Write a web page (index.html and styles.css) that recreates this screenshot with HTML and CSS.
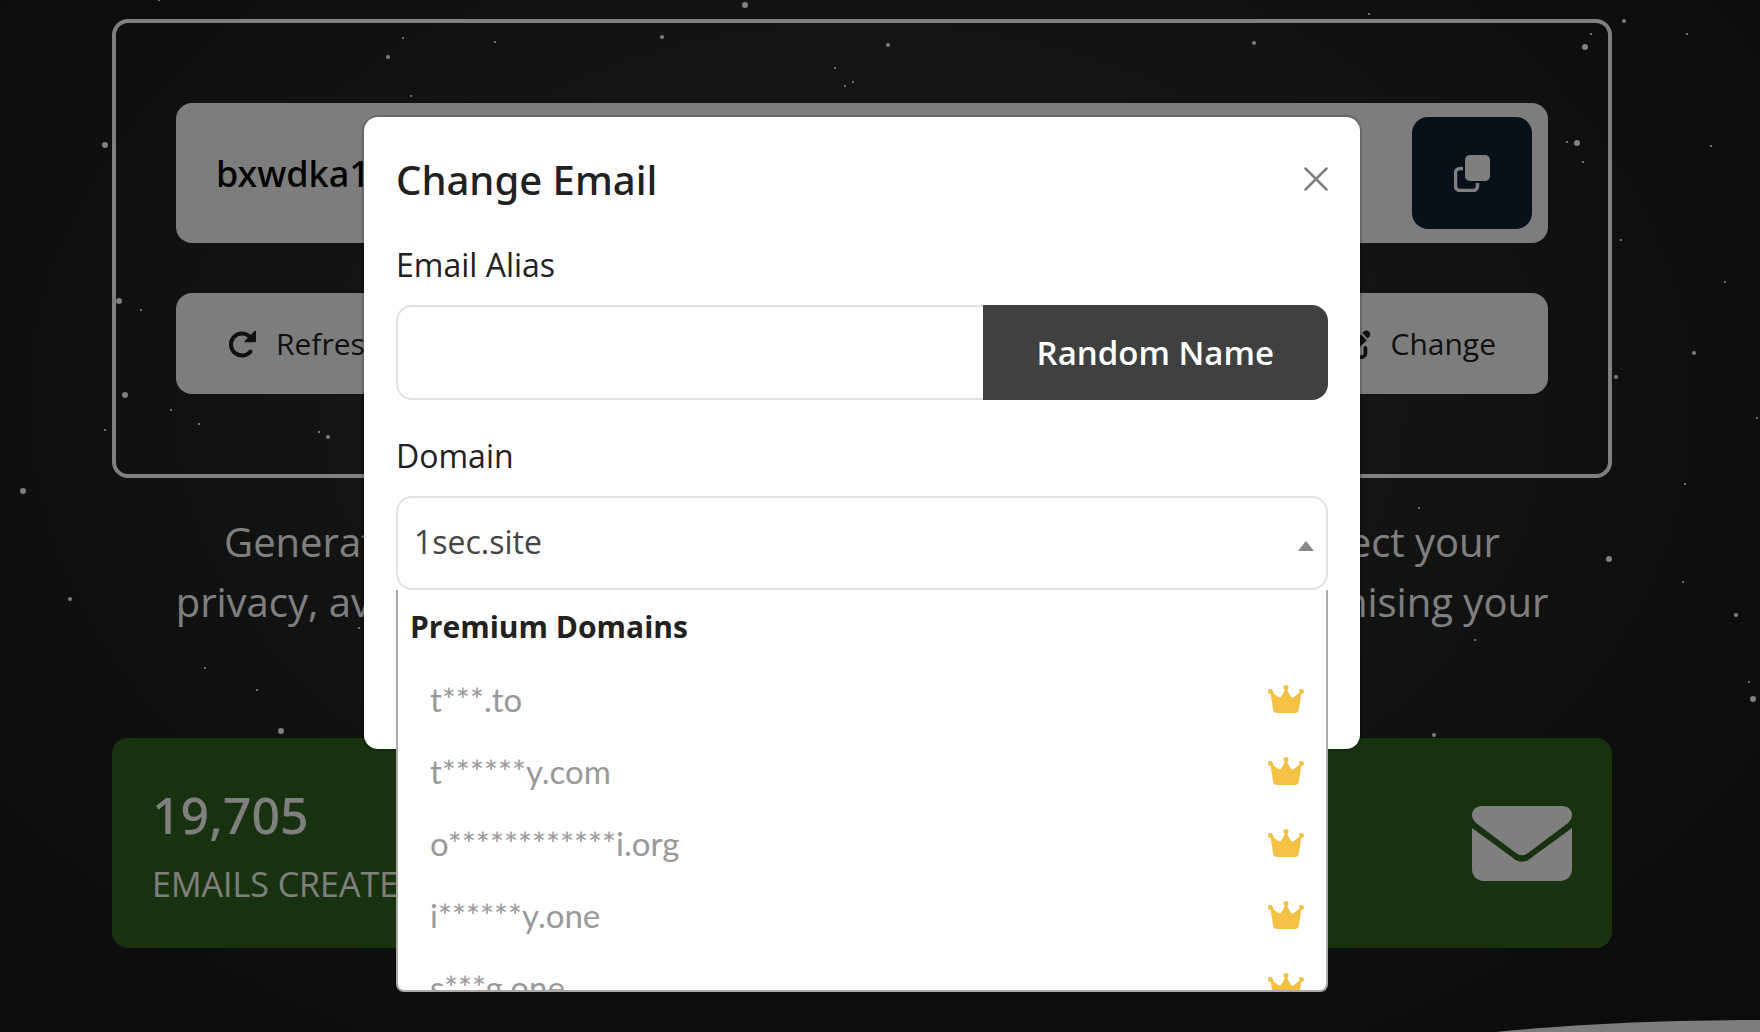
FILE: index.html
```
<!DOCTYPE html>
<html lang="en">
<head>
    <meta charset="UTF-8">
    <title>Temp Mail</title>
    <link rel="stylesheet" href="styles.css">
</head>
<body>
    <main class="page">
        <section class="mailbox">
            <div class="address-bar">
                <input class="address" type="text" value="bxwdka1ms@1sec.site" aria-label="Your email" readonly>
                <button class="copy-btn" aria-label="Copy">
                    <svg viewBox="0 0 36 37" width="36" height="37">
                        <rect x="11" y="0" width="25" height="26" rx="5" fill="currentColor"/>
                        <path d="M9 13.500H6a4.500 4.500 0 0 0-4.500 4.500v13a4.500 4.500 0 0 0 4.500 4.500h13a4.500 4.500 0 0 0 4.500-4.500v-3" fill="none" stroke="currentColor" stroke-width="3.500"/>
                    </svg>
                </button>
            </div>
            <div class="actions">
                <button class="action">
                    <svg viewBox="0 0 28 28" width="28" height="28">
                        <path d="M22.500 21.500A11 11 0 1 1 21.500 6.500" fill="none" stroke="currentColor" stroke-width="4" stroke-linecap="round"/>
                        <path d="M26 1.500a1 1 0 0 1 2 .7V11a1.300 1.300 0 0 1-1.300 1.300H18a1 1 0 0 1-.7-2z" fill="currentColor"/>
                    </svg>
                    Refresh
                </button>
                <button class="action">
                    <svg viewBox="0 0 26 28" width="26" height="28">
                        <path d="M9 0h8l2 3h7v4H0V3h7zM2 9h22l-1 17a2 2 0 0 1-2 2H5a2 2 0 0 1-2-2z" fill="currentColor"/>
                    </svg>
                    Delete
                </button>
                <button class="action">
                    <svg viewBox="0 0 512 512" width="30" height="30">
                        <path d="M472 40c-22-22-58-22-80 0l-30 30 92 92 30-30c22-22 22-58 0-80zM340 92 172 260c-6 6-10 13-13 21l-31 93c-3 9 0 18 6 24s15 9 24 6l93-31c8-3 15-7 21-13l168-168z" fill="currentColor"/>
                        <path d="M192 96H96a64 64 0 0 0-64 64v256a64 64 0 0 0 64 64h256a64 64 0 0 0 64-64v-96" fill="none" stroke="currentColor" stroke-width="64" stroke-linecap="round"/>
                    </svg>
                    Change
                </button>
            </div>
        </section>

        <p class="intro">
            Generate a free temporary email address in one click to protect your<br>
            privacy, avoid spam and sign up for every site without compromising your
        </p>

        <section class="stat">
            <div>
                <div class="stat-number">19,705</div>
                <div class="stat-label">EMAILS CREATED</div>
            </div>
            <svg class="stat-icon" viewBox="0 0 100 75" width="100" height="75">
                <path d="M10 0H90C96 0 100 4 100 9C100 12 98 15 96 17L56 47C52 50 48 50 44 47L4 17C2 15 0 12 0 9C0 4 4 0 10 0ZM0 22L41 52C46 57 54 57 59 52L100 22V63C100 70 95 75 88 75H12C5 75 0 70 0 63Z" fill="currentColor"/>
            </svg>
        </section>
    </main>

    <div class="stars stars-small"></div>
    <div class="stars stars-medium"></div>
    <div class="stars stars-big"></div>
    <svg class="curve" viewBox="0 0 264 12" width="264" height="12">
        <path d="M0 12C70 5 160 0 264 0V12Z" fill="currentColor"/>
    </svg>

    <div class="backdrop">
        <div class="modal" role="dialog" aria-labelledby="modalTitle">
            <div class="modal-header">
                <h5 id="modalTitle">Change Email</h5>
                <button class="close-btn" aria-label="Close">
                    <svg viewBox="0 0 24 24" width="24" height="24">
                        <path d="M1.500 1.500l21 21M22.500 1.500l-21 21" stroke="currentColor" stroke-width="2.500" stroke-linecap="round"/>
                    </svg>
                </button>
            </div>
            <label for="alias">Email Alias</label>
            <div class="input-group">
                <input type="text" id="alias">
                <button class="random-btn">Random Name</button>
            </div>
            <label for="domain">Domain</label>
            <div class="select-wrap">
                <select id="domain">
                    <option>1sec.site</option>
                </select>
                <div class="dropdown">
                    <strong class="group-title">Premium Domains</strong>
                    <ul id="premiumList"></ul>
                </div>
            </div>
        </div>
    </div>

    <script>
        const domains = ["t***.to", "t******y.com", "o************i.org", "i******y.one", "s***g.one"];
        const crown = '<svg viewBox="0 0 36 28" width="36" height="28">' +
            '<path d="M2.500 7L4 6.500Q8 11 11 12.500Q12.500 13 13.500 11Q16 7.500 17 4H19Q20 7.500 22.500 11Q23.500 13 25 12.500Q28 11 32 6.500L33.500 7L31 24Q30.500 28 27 28H9Q5.500 28 5 24Z"/>' +
            '<circle cx="2.500" cy="6.500" r="2.500"/><circle cx="18" cy="2.500" r="2.500"/><circle cx="33.500" cy="6.500" r="2.500"/></svg>';
        document.getElementById('premiumList').innerHTML =
            domains.map(name => `<li><span>${name}</span>${crown}</li>`).join('');
    </script>
</body>
</html>
```
FILE: styles.css
```
* {
    box-sizing: border-box;
}

body {
    margin: 0;
    height: 100vh;
    overflow: hidden;
    position: relative;
    padding-right: 36px;
    background: radial-gradient(ellipse at 49% 39%, #343635 0%, #1b1d1c 71%, #151716 100%);
    font-family: "Open Sans", "Noto Sans", sans-serif;
    font-size: 32px;
    color: #212121;
}

button, input, select {
    font-family: inherit;
    font-size: inherit;
    color: inherit;
}

button {
    border: none;
    cursor: pointer;
}

.page {
    max-width: 1500px;
    margin: 0 auto;
    padding-top: 19px;
}

.mailbox {
    border: 4px solid #fff;
    border-radius: 16px;
    padding: 80px 60px;
}

.address-bar {
    display: flex;
    height: 140px;
    padding: 14px 16px 14px 40px;
    background: #fafafa;
    border-radius: 16px;
}

.address {
    flex: 1;
    padding: 0;
    border: none;
    background: none;
    font-family: "Noto Sans", sans-serif;
    font-size: 36px;
    font-weight: 500;
    color: #000;
}

.copy-btn {
    display: flex;
    align-items: center;
    justify-content: center;
    width: 120px;
    border-radius: 16px;
    background: #0f2238;
    color: #fff;
}

.actions {
    display: flex;
    justify-content: space-between;
    margin-top: 50px;
}

.action {
    display: flex;
    align-items: center;
    gap: 20px;
    height: 101px;
    padding: 0 52px;
    border-radius: 16px;
    background: #fafafa;
    font-size: 30px;
    font-weight: 500;
}

.intro {
    margin: 34px 0 0;
    text-align: center;
    font-size: 40px;
    line-height: 60px;
    color: #fff;
}

.stat {
    display: flex;
    align-items: center;
    justify-content: space-between;
    height: 210px;
    margin-top: 106px;
    padding: 0 40px;
    border-radius: 16px;
    background: #306420;
    color: #fff;
}

.stat-number {
    padding-top: 12px;
    font-family: "Noto Sans", sans-serif;
    font-size: 50px;
    font-weight: 500;
    line-height: 70px;
}

.stat-label {
    font-size: 34px;
    line-height: 68px;
}

/* star field */
.stars {
    position: absolute;
    top: 0;
    left: 0;
}

.stars-small {
    width: 2px;
    height: 2px;
    color: #ddd;
    box-shadow: 158px -1px, 402px 37px, 410px 95px, 140px 309px, 170px 409px, 198px 423px,
        104px 429px, 318px 431px, 228px 597px, 358px 627px, 204px 667px, 256px 689px,
        1368px 13px, 1590px 33px, 1686px 33px, 1566px 141px, 1582px 161px, 1710px 145px,
        1620px 239px, 1724px 281px, 1756px 417px, 1684px 483px, 1418px 507px, 1682px 581px,
        1474px 639px, 1748px 681px, 494px 41px, 834px 67px, 844px 85px, 852px 81px;
}

.stars-medium {
    width: 4px;
    height: 4px;
    border-radius: 50%;
    color: #fff;
    box-shadow: 386px 55px, 326px 435px, 68px 597px, 1622px 19px, 1692px 351px, 1614px 375px,
        1734px 613px, 1432px 733px, 660px 35px, 886px 43px, 1252px 41px;
}

.stars-big {
    width: 6px;
    height: 6px;
    border-radius: 50%;
    color: #fff;
    box-shadow: 102px 142px, 116px 298px, 122px 392px, 20px 488px, 278px 728px, 1582px 44px,
        1574px 140px, 1606px 556px, 1750px 696px, 742px 2px;
}

.curve {
    position: absolute;
    right: 0;
    bottom: 0;
    color: #fafafa;
}

.backdrop {
    position: absolute;
    inset: 0;
    padding: 115px 36px 0 0;
    background: rgba(0, 0, 0, 0.5);
}

.modal {
    max-width: 1000px;
    height: 636px;
    margin: 0 auto;
    padding: 32px;
    border: 2px solid rgba(0, 0, 0, 0.175);
    border-radius: 16px;
    background: #fff;
    background-clip: padding-box;
}

.modal-header {
    display: flex;
    align-items: center;
    justify-content: space-between;
    height: 60px;
    margin-bottom: 32px;
}

.modal-header h5 {
    margin: 0;
    font-family: "Noto Sans", sans-serif;
    font-size: 40px;
    font-weight: 500;
}

.close-btn {
    display: flex;
    padding: 0;
    background: none;
    color: #808080;
}

label {
    display: block;
    line-height: 48px;
    margin-bottom: 16px;
}

.input-group {
    display: flex;
    height: 95px;
    margin-bottom: 32px;
}

.input-group input {
    flex: 1;
    min-width: 0;
    padding: 0 24px;
    border: 2px solid #dee2e6;
    border-right: none;
    border-radius: 16px 0 0 16px;
}

.random-btn {
    padding: 0 54px;
    border-radius: 0 16px 16px 0;
    background: #3f4140;
    color: #fff;
    font-size: 33px;
    font-weight: 600;
}

.select-wrap {
    position: relative;
}

.select-wrap::after {
    content: "";
    position: absolute;
    top: 45px;
    right: 14px;
    border: 8px solid transparent;
    border-top: none;
    border-bottom: 10px solid #888;
}

select {
    display: block;
    width: 100%;
    height: 94px;
    padding: 0 16px 4px;
    appearance: none;
    border: 2px solid #dee2e6;
    border-radius: 16px;
    background: #fff;
    color: #444;
}

.dropdown {
    position: absolute;
    top: 94px;
    left: 0;
    right: 0;
    height: 402px;
    overflow: hidden;
    border: 2px solid #aaa;
    border-top: none;
    border-radius: 0 0 8px 8px;
    background: #fff;
}

.group-title {
    display: block;
    padding: 0 12px;
    font-size: 30px;
    line-height: 73px;
}

.dropdown ul {
    margin: 0;
    padding: 0;
    list-style: none;
}

.dropdown li {
    display: flex;
    align-items: center;
    justify-content: space-between;
    height: 72px;
    padding: 0 22px 0 32px;
    font-family: Lato, sans-serif;
    font-size: 33px;
    color: #999;
}

.dropdown li svg {
    fill: #f4c145;
}
```
